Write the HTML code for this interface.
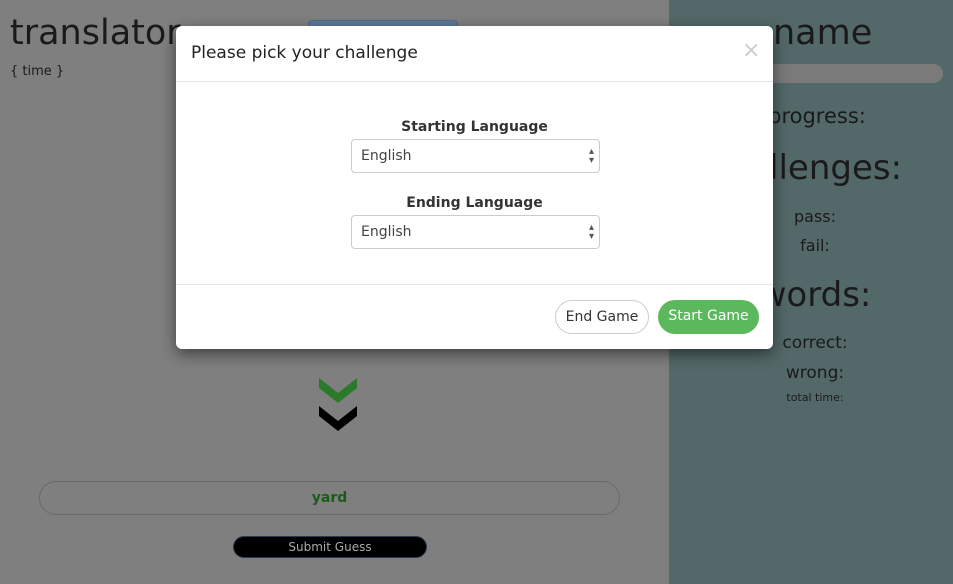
<!DOCTYPE html>
<html><head><meta charset="utf-8"><style>
*{box-sizing:border-box;margin:0;padding:0}
body{width:953px;height:584px;overflow:hidden;position:relative;font-family:"DejaVu Sans","Liberation Sans",sans-serif;background:#7f7f7f;color:#1a1a1a}
.abs{position:absolute}
.right{left:669px;top:0;width:284px;height:584px;background:#536868}
.c{text-align:center;width:200px;left:715px}
.modal{left:176px;top:26px;width:597px;height:323px;background:#fff;border-radius:6px;box-shadow:0 5px 15px rgba(0,0,0,.5)}
.sel{position:absolute;left:175px;width:249px;height:34px;border:1px solid #ccc;border-radius:4px;font-size:14px;padding:8px 0 0 9px;color:#444}
.sel:after{content:"▴\A▾";white-space:pre;position:absolute;right:5px;top:7px;font-size:10px;line-height:9px;color:#555}
.lbl{position:absolute;left:0;width:597px;text-align:center;font-weight:bold;font-size:14px;color:#333}
</style></head><body>
<div class="abs" style="left:10px;top:13px;font-size:35px;">translator</div>
<div class="abs" style="left:10px;top:64px;font-size:13px;">{ time }</div>
<div class="abs" style="left:308px;top:20px;width:150px;height:30px;background:#5d7999;border:1px solid #4d6a8d;border-radius:4px"></div>
<div class="abs right"></div>
<div class="abs" style="left:740px;top:64px;width:203px;height:19px;background:#7a7a7a;border-radius:10px"></div>
<div class="abs c" style="top:13px;font-size:35px;left:773px;text-align:left">name</div>
<div class="abs c" style="top:104px;font-size:21px;left:717px">progress:</div>
<div class="abs c" style="top:148px;font-size:34px;left:705px">challenges:</div>
<div class="abs c" style="top:207px;font-size:16px">pass:</div>
<div class="abs c" style="top:236px;font-size:16px">fail:</div>
<div class="abs c" style="top:275px;font-size:34px;left:715px">words:</div>
<div class="abs c" style="top:333px;font-size:17px">correct:</div>
<div class="abs c" style="top:363px;font-size:17px">wrong:</div>
<div class="abs c" style="top:391px;font-size:11px">total time:</div>
<svg class="abs" style="left:318px;top:376px" width="42" height="58"><polygon points="1,2 20,17 39,2 39,12 20,27 1,12" fill="#2b7a2b"/><polygon points="1,30 20,45 39,30 39,40 20,55 1,40" fill="#000"/></svg>
<div class="abs" style="left:39px;top:481px;width:581px;height:34px;border:1px solid #6a6a6a;border-radius:17px;text-align:center;font-weight:bold;font-size:14px;color:#1a5c1a;padding-top:8px">yard</div>
<div class="abs" style="left:233px;top:536px;width:194px;height:22px;background:#000;border:1px solid #2a3a50;border-radius:11px;text-align:center;font-size:12px;color:#aaa;padding-top:3px">Submit Guess</div>
<div class="abs modal">
<div class="abs" style="left:15px;top:17px;font-size:17px;color:#222">Please pick your challenge</div>
<div class="abs" style="left:566px;top:12px;font-size:22px;color:#ccc">×</div>
<div class="abs" style="left:0;top:55px;width:597px;height:1px;background:#e5e5e5"></div>
<div class="lbl" style="top:93px">Starting Language</div>
<div class="sel" style="top:113px">English</div>
<div class="lbl" style="top:169px">Ending Language</div>
<div class="sel" style="top:189px">English</div>
<div class="abs" style="left:0;top:258px;width:597px;height:1px;background:#e5e5e5"></div>
<div class="abs" style="left:379px;top:274px;width:94px;height:34px;border:1px solid #ccc;border-radius:17px;font-size:14px;text-align:center;padding-top:8px;color:#333">End Game</div>
<div class="abs" style="left:482px;top:274px;width:101px;height:34px;background:#5cb85c;border-radius:17px;font-size:14px;text-align:center;padding-top:8px;color:#fff">Start Game</div>
</div>
</body></html>
